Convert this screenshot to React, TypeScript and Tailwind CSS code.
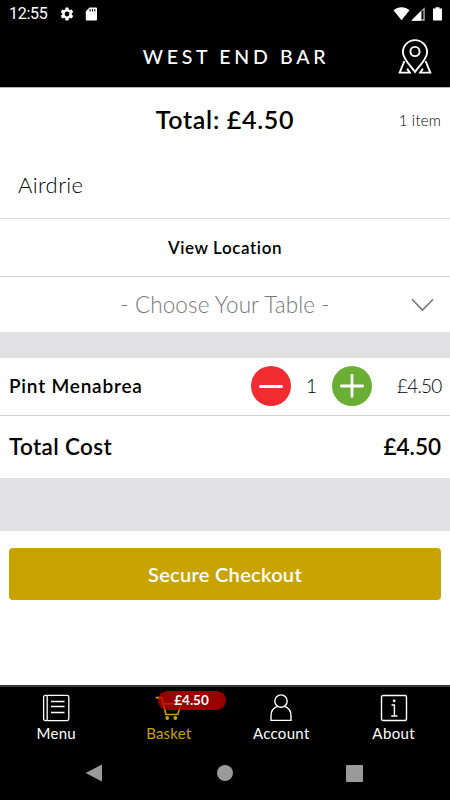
import type { ReactNode } from 'react';

interface Tab {
  id: string;
  label: string;
  icon: ReactNode;
  spacing: string;
  badge?: string;
}

const TABS: Tab[] = [
  { id: 'menu', label: 'Menu', icon: <MenuIcon />, spacing: 'tracking-[0.3px]' },
  { id: 'basket', label: 'Basket', icon: <BasketIcon />, spacing: 'tracking-[0.2px]', badge: '£4.50' },
  { id: 'account', label: 'Account', icon: <AccountIcon />, spacing: 'tracking-[0.3px]' },
  { id: 'about', label: 'About', icon: <AboutIcon />, spacing: 'tracking-[0.4px]' },
];

function MenuIcon() {
  return (
    <svg width="28" height="28" viewBox="0 0 28 28" fill="none" stroke="currentColor" strokeWidth="1.3">
      <rect x="1.6" y="1.4" width="25.2" height="25.2" rx="1.8" />
      <path d="M5.2 1.4v25.2M9 7.5h13.5M9 12.5h13.5M9 18.500h13.5" />
    </svg>
  );
}

function BasketIcon() {
  return (
    <svg width="28" height="28" viewBox="0 0 28 28" fill="none" stroke="currentColor" strokeWidth="1.6">
      <path d="M.8 3.600h6l4.100 16.900h11.900L26 9.800H8.400" />
      <circle cx="12.200" cy="24" r="1.900" fill="currentColor" stroke="none" />
      <circle cx="20.300" cy="24" r="1.900" fill="currentColor" stroke="none" />
    </svg>
  );
}

function AccountIcon() {
  return (
    <svg width="28" height="28" viewBox="0 0 28 28" fill="none" stroke="currentColor" strokeWidth="1.400">
      <circle cx="14" cy="7.100" r="6.200" />
      <path d="M10.500 12.400C6.300 13.900 4 17.300 4 21.800v4.600h20v-4.600c0-4.500-2.300-7.900-6.500-9.400" />
    </svg>
  );
}

function AboutIcon() {
  return (
    <svg width="28" height="28" viewBox="0 0 28 28" fill="none" stroke="currentColor" strokeWidth="1.400">
      <rect x="1.500" y="1.500" width="25" height="25" rx="1.500" />
      <path d="M11.500 11h2.900v11M11.200 22h6.300" />
      <circle cx="14.200" cy="6.800" r="1.400" fill="currentColor" stroke="none" />
    </svg>
  );
}

function LocationIcon() {
  return (
    <svg width="34" height="36" viewBox="0 0 34 36" fill="none" stroke="currentColor" strokeWidth="1.900">
      <path d="M17 33C12.200 26.300 4.900 19.700 4.900 13.200a12.100 12.100 0 0 1 24.200 0c0 6.500-7.300 13.100-12.100 19.800Z" />
      <circle cx="17" cy="12.500" r="4.600" />
      <path d="M6.400 22 1.700 33.600h10.100l-2.700-4M27.600 22l4.700 11.600H22.200l2.700-4" />
    </svg>
  );
}

function StatusBar() {
  return (
    <div className="flex h-7 items-center pl-[9px] pr-2 font-[Roboto] text-[16px]">
      <span className="w-[49px] tracking-[-0.300px]">12:55</span>
      <svg className="ml-px" width="16" height="16" viewBox="0 0 24 24" fill="currentColor">
        <path d="M19.140 12.940c.040-.300.060-.610.060-.940s-.020-.640-.070-.940l2.030-1.580a.490.490 0 0 0 .120-.610l-1.920-3.320a.488.488 0 0 0-.590-.220l-2.390.960c-.500-.380-1.030-.700-1.620-.940L14.400 2.810a.484.484 0 0 0-.480-.410h-3.840c-.240 0-.430.170-.470.410l-.360 2.540c-.590.240-1.130.570-1.620.940l-2.390-.960a.488.488 0 0 0-.590.220L2.740 8.870a.480.480 0 0 0 .120.610l2.030 1.580c-.050.300-.090.630-.090.940s.020.640.070.940l-2.030 1.580a.490.490 0 0 0-.120.610l1.920 3.320c.120.220.370.290.590.220l2.390-.960c.500.380 1.030.700 1.620.940l.360 2.540c.050.240.240.410.480.410h3.840c.240 0 .440-.170.470-.410l.360-2.540c.590-.240 1.130-.560 1.620-.940l2.390.960c.220.080.470 0 .590-.220l1.920-3.320a.480.480 0 0 0-.120-.610ZM12 15.600a3.600 3.600 0 1 1 0-7.200 3.600 3.600 0 0 1 0 7.200Z" />
      </svg>
      <svg className="ml-[10px]" width="13" height="14" viewBox="0 0 13 14" fill="currentColor">
        <path fillRule="evenodd" d="M4.500.400h6.300c.700 0 1.200.500 1.200 1.200v10.800c0 .700-.500 1.200-1.200 1.200H2c-.700 0-1.200-.500-1.200-1.200V4.300ZM4.600 2v2.400h1V2ZM7 2v2.400h1V2Zm2.300 0v2.400h1V2Z" />
      </svg>
      <div className="ml-auto flex items-center">
        <svg width="17" height="14" viewBox="0 0 17 14" fill="currentColor">
          <path d="M.500 3.200C5 -.700 12 -.700 16.500 3.200L8.500 13.300Z" />
        </svg>
        <svg className="ml-px" width="14" height="14" viewBox="0 0 14 14">
          <path d="M13.700.300v13.400H.300Z" fill="#bbb" />
          <path d="M10.600 4.500v7.800h1.800V3Z" fill="#000" />
          <path d="M10 4v9.700H.300Z" fill="currentColor" />
        </svg>
        <svg className="ml-[8px]" width="9" height="14" viewBox="0 0 9 14" fill="currentColor">
          <path d="M2.500.300h4v1.300H9v12H0v-12h2.500Z" />
        </svg>
      </div>
    </div>
  );
}

function Header() {
  return (
    <header className="h-[88px] shrink-0 border-b border-[#b5b5b5] bg-black text-white">
      <StatusBar />
      <div className="grid h-[58px] grid-cols-[52px_1fr_52px] items-center">
        <h1 className="col-start-2 whitespace-nowrap pl-[22px] text-center text-[19.500px] font-medium tracking-[3.700px]">WEST END BAR</h1>
        <button aria-label="Find a venue">
          <LocationIcon />
        </button>
      </div>
    </header>
  );
}

function ItemRow() {
  return (
    <div className="flex h-[58px] items-center border-b border-[#d3d3d3] px-[9px] pb-px">
      <span className="flex-1 text-[19px] font-semibold tracking-[0.800px]">Pint Menabrea</span>
      <div className="mr-[25px] flex w-[121px] items-center justify-between">
        <button className="flex size-10 items-center justify-center rounded-full bg-[#f12c30]" aria-label="Remove one">
          <span className="h-[3px] w-6 rounded-full bg-white" />
        </button>
        <span className="text-[19px] font-light">1</span>
        <button className="grid size-10 place-items-center rounded-full bg-[#6aae36]" aria-label="Add one">
          <svg width="24" height="24" viewBox="0 0 24 24" stroke="#fff" strokeWidth="2.800" strokeLinecap="round">
            <path d="M12 1.400v21.200M1.400 12h21.200" />
          </svg>
        </button>
      </div>
      <span className="w-[44px] whitespace-nowrap text-[19px] font-light tracking-[-0.800px]">£4.50</span>
    </div>
  );
}

function TabBar() {
  return (
    <nav className="grid h-[61px] grid-cols-4 border-t-2 border-[#3a3a3a]">
      {TABS.map((tab) => (
        <button
          key={tab.id}
          className={`relative flex flex-col items-center pt-[7px] ${tab.badge ? 'text-[#c9a300]' : 'text-white'}`}
        >
          {tab.icon}
          <span className={`mt-px text-[15px] leading-5 ${tab.spacing}`}>{tab.label}</span>
          {tab.badge && (
            <span className="absolute left-[45px] top-[4px] h-[19px] w-[68px] rounded-full bg-[#be0000]/80 text-center text-[13.500px] font-bold leading-[18px] text-white">
              {tab.badge}
            </span>
          )}
        </button>
      ))}
    </nav>
  );
}

export default function App() {
  return (
    <div className="flex h-[800px] w-[450px] flex-col overflow-hidden bg-white font-[Lato,sans-serif] text-black">
      <Header />

      <main className="flex-1">
        <section>
          <div className="grid h-[65px] grid-cols-[80px_1fr_80px] items-center px-[9px]">
            <h2 className="col-start-2 pb-0.5 text-center text-[25px] font-semibold tracking-[0.700px]">Total: £4.50</h2>
            <span className="text-right text-[15px] font-light tracking-[0.200px]">1 item</span>
          </div>
          <div className="flex h-[66px] items-center border-b border-[#dcdcdc] px-[18px] pb-0.5 text-[22px] font-light tracking-[0.400px]">
            Airdrie
          </div>
          <button className="flex h-[58px] w-full items-center justify-center border-b border-[#d3d3d3] text-[17px] font-semibold tracking-[0.600px]">
            View Location
          </button>
          <button className="grid h-[55px] w-full grid-cols-[56px_1fr_56px] items-center text-[#777]">
            <span className="col-start-2 text-center text-[22.500px] font-light tracking-[0.100px]">- Choose Your Table -</span>
            <svg width="24" height="14" viewBox="0 0 24 14" fill="none" stroke="currentColor" strokeWidth="1.600" className="ml-4">
              <path d="M2 1.200 12.500 12 23 1.200" />
            </svg>
          </button>
        </section>

        <div className="h-[26px] bg-[#e1e1e3]" />

        <section>
          <ItemRow />
          <div className="flex h-[62px] items-center justify-between px-[9px] text-[22.500px] font-semibold">
            <span className="tracking-[0.350px]">Total Cost</span>
            <span>£4.50</span>
          </div>
        </section>

        <div className="h-[53px] bg-[#e1e1e3]" />

        <div className="px-[9px] pt-[17px]">
          <button className="h-[52px] w-full rounded-[4px] bg-[#c9a400] pb-px text-[20px] font-semibold tracking-[0.300px] text-white">
            Secure Checkout
          </button>
        </div>
      </main>

      <footer className="h-[115px] shrink-0 bg-black">
        <TabBar />
        {/* Android navigation buttons */}
        <div className="flex h-[54px] items-center justify-between pl-[85px] pr-[87px] text-[#9a9a9a]">
          <svg width="18" height="20" viewBox="0 0 18 20" fill="currentColor">
            <path d="M17 2v16q0 .500-.600.200L1.200 10.300q-.500-.300 0-.600L16.400 1.800q.600-.300.600.200Z" />
          </svg>
          <span className="size-4 rounded-full bg-[#9a9a9a]" />
          <span className="size-[17px] rounded-[1px] bg-[#9a9a9a]" />
        </div>
      </footer>
    </div>
  );
}
